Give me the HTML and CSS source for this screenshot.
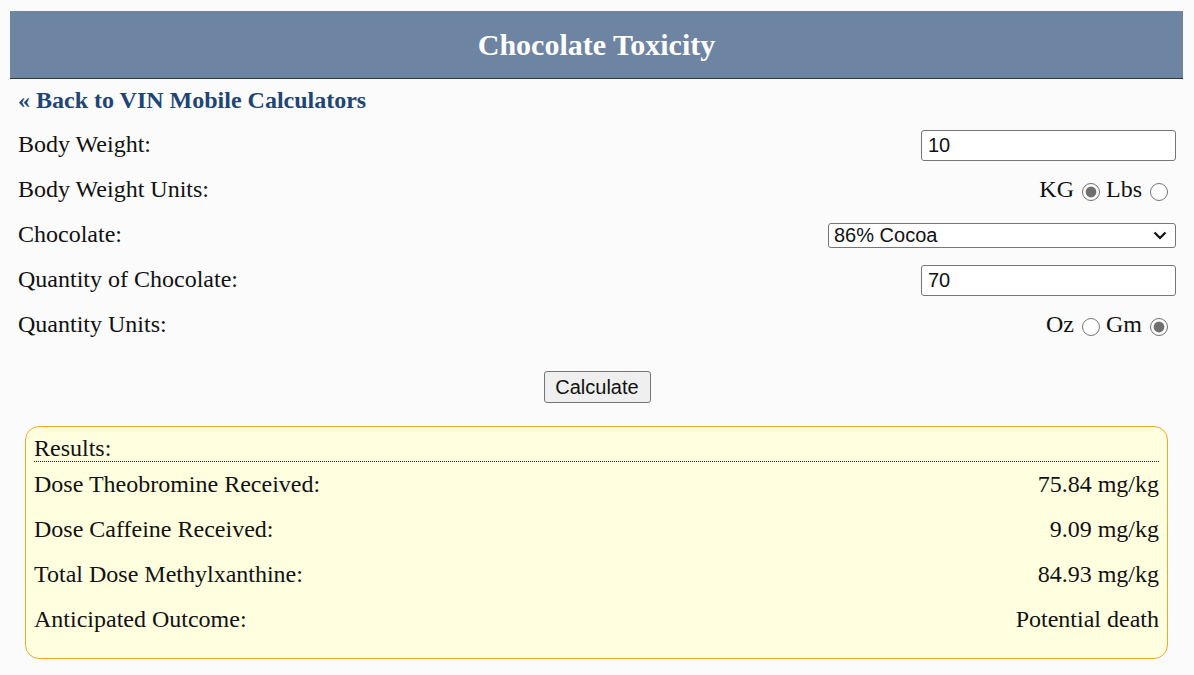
FILE: index.html
```html
<!doctype html>
<html>

<head>
<meta charset="utf-8" />
<meta name="viewport" content="width=device-width, initial-scale=1" />
<title>Chocolate Toxicity</title>
<link rel="stylesheet" href="styles.css">
</head>

<body>

<header class="topbar">
	<h1>Chocolate Toxicity</h1>
</header>

<section class="calc">
	<a class="back" href="#">&laquo; Back to VIN Mobile Calculators</a>

	<form class="fields">
		<div class="row">
			<label for="weight">Body Weight:</label>
			<input type="text" id="weight" class="num" value="10">
		</div>
		<div class="row">
			<span>Body Weight Units:</span>
			<span class="choice">KG <input type="radio" name="wunit" checked> Lbs <input type="radio" name="wunit"></span>
		</div>
		<div class="row">
			<label for="choc">Chocolate:</label>
			<span class="select-wrap">
				<select id="choc">
					<option>86% Cocoa</option>
				</select>
				<svg class="chev" width="14" height="9" viewBox="0 0 14 9"><path d="M1.5 1.5 L7 7 L12.5 1.5" fill="none" stroke="#111" stroke-width="2.2"/></svg>
			</span>
		</div>
		<div class="row">
			<label for="qty">Quantity of Chocolate:</label>
			<input type="text" id="qty" class="num" value="70">
		</div>
		<div class="row">
			<span>Quantity Units:</span>
			<span class="choice">Oz <input type="radio" name="qunit"> Gm <input type="radio" name="qunit" checked></span>
		</div>
		<div class="actions">
			<button type="button">Calculate</button>
		</div>
	</form>

	<div class="results">
		<div class="results-head">Results:</div>
		<div class="row"><span>Dose Theobromine Received:</span><span>75.84 mg/kg</span></div>
		<div class="row"><span>Dose Caffeine Received:</span><span>9.09 mg/kg</span></div>
		<div class="row"><span>Total Dose Methylxanthine:</span><span>84.93 mg/kg</span></div>
		<div class="row"><span>Anticipated Outcome:</span><span>Potential death</span></div>
	</div>
</section>

</body>

</html>
```

FILE: styles.css
```css
* {
	margin: 0;
	padding: 0;
	box-sizing: border-box;
}
html, body {
	background: #fbfbfb;
}
body {
	padding: 11px 11px 0 10px;
	font-family: "Liberation Serif", "Times New Roman", serif;
	font-size: 24px;
	line-height: 1.15;
	color: #111;
}
.topbar {
	background: #6e84a3;
	border-bottom: 1px solid #2c3440;
	height: 68px;
	display: flex;
	align-items: center;
	justify-content: center;
}
.topbar h1 {
	color: #fff;
	font-size: 30px;
	font-weight: bold;
	padding-top: 2px;
}
.calc {
	padding: 0 7px 0 8px;
}
.back {
	display: block;
	height: 44px;
	padding-top: 8px;
	color: #1d4677;
	font-weight: bold;
	text-decoration: none;
}
.row {
	display: flex;
	justify-content: space-between;
	align-items: center;
	height: 45px;
}
.fields .row label, .fields .row > span:first-child {
	padding-bottom: 2px;
}
.num, select, button {
	font-family: "Liberation Sans", Arial, sans-serif;
	font-size: 20px;
	color: #111;
}
.num {
	width: 255px;
	height: 31px;
	padding: 0 6px;
	border: 1px solid #767676;
	border-radius: 3px;
	background: #fff;
}
.select-wrap {
	position: relative;
	display: block;
}
select {
	display: block;
	width: 348px;
	height: 25px;
	padding: 0 4px 0 5px;
	border: 1px solid #767676;
	border-radius: 3px;
	background: #fff;
	appearance: none;
	-webkit-appearance: none;
	line-height: 23px;
}
.chev {
	position: absolute;
	right: 9px;
	top: 8px;
	pointer-events: none;
}
.choice {
	display: flex;
	align-items: center;
	padding-bottom: 2px;
}
.choice input {
	flex: none;
	width: 18px;
	height: 18px;
	margin: 4px 6px 0 8px;
	accent-color: #6f6f6f;
}
.choice input:last-child {
	margin-right: 8px;
}
.actions {
	display: flex;
	justify-content: center;
	padding: 23px 0 23px;
}
button {
	width: 107px;
	height: 32px;
	background: #efefef;
	border: 1px solid #767676;
	border-radius: 3px;
}
.results {
	margin: 0 8px 0 7px;
	padding: 8px 8px 16px;
	background: #ffffe0;
	border: 1px solid #f4a824;
	border-radius: 14px;
}
.results-head {
	height: 27px;
	border-bottom: 1px dotted #222;
}
```
